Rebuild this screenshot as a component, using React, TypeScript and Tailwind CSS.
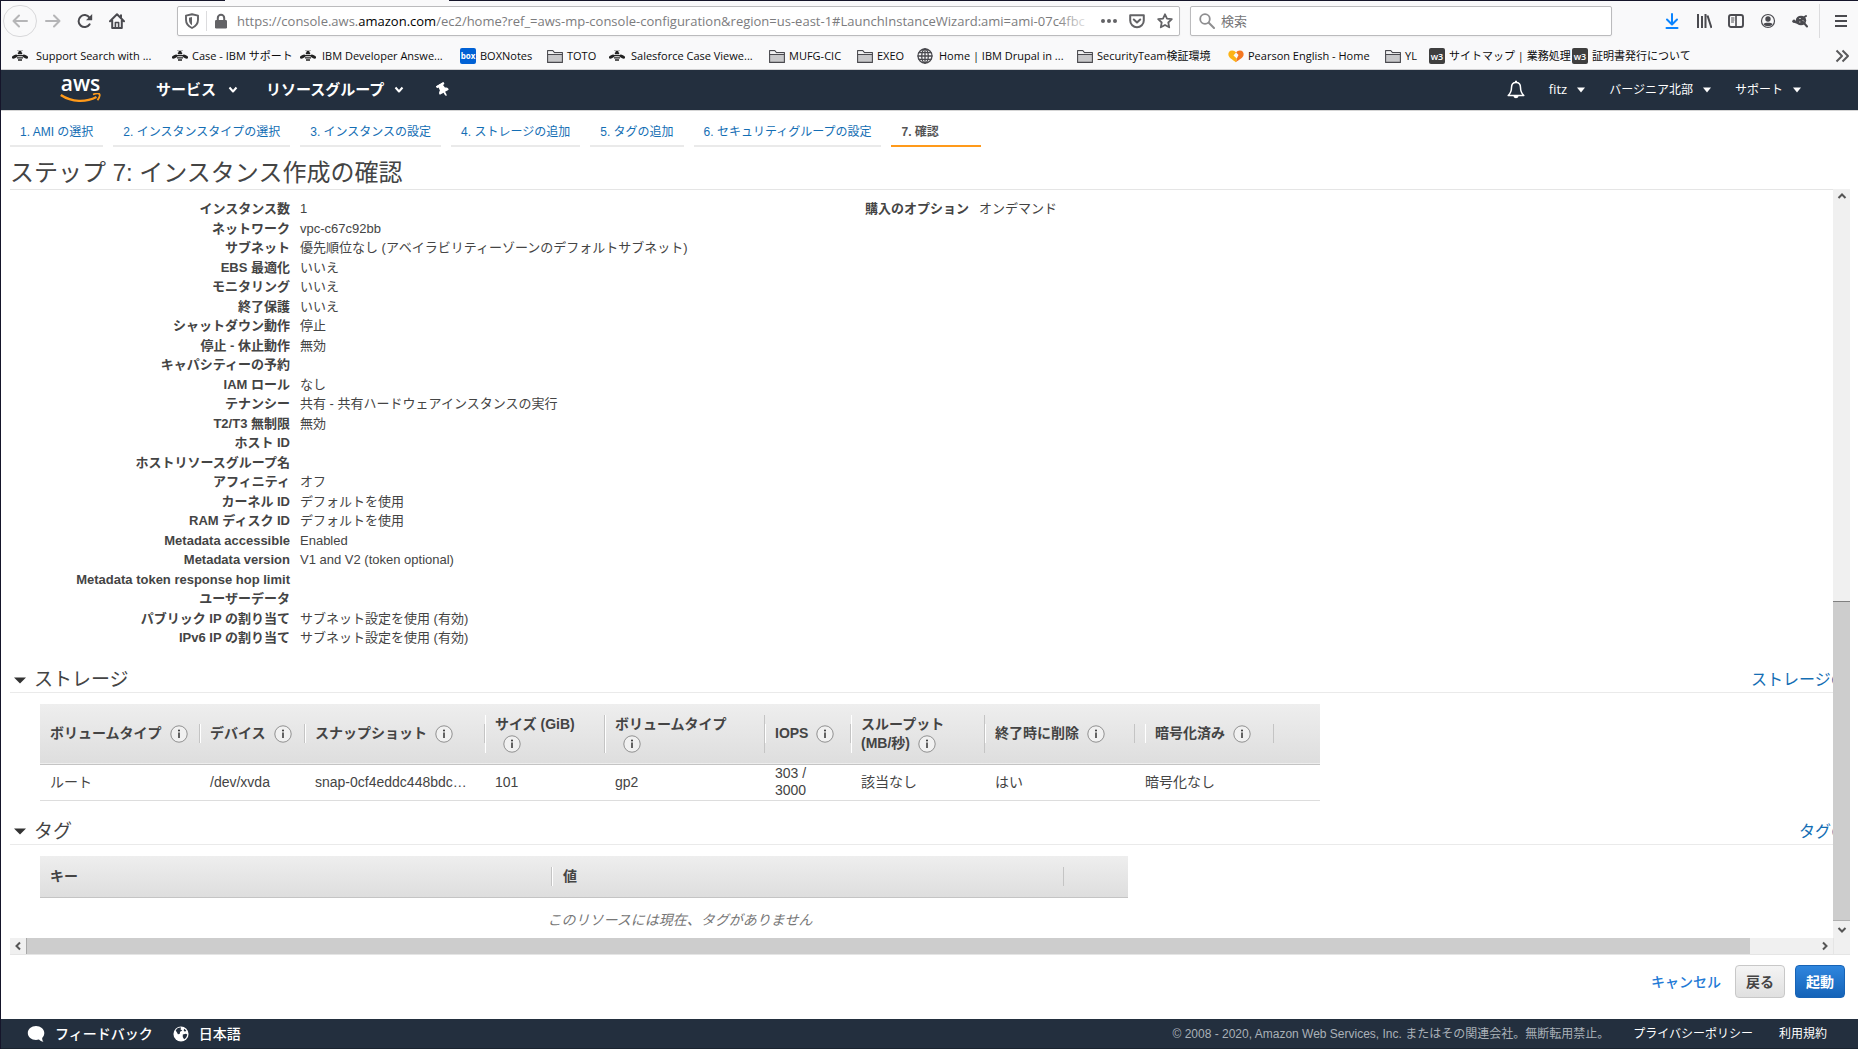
import type { ReactNode } from "react";
import { FaThumbtack } from "react-icons/fa";

const stroke = {
  fill: "none",
  stroke: "currentColor",
  strokeLinecap: "round",
  strokeLinejoin: "round",
} as const;

function Icon({ children, className = "size-4" }: { children: ReactNode; className?: string }) {
  return (
    <svg viewBox="0 0 16 16" className={`shrink-0 ${className}`} aria-hidden="true">
      {children}
    </svg>
  );
}

const BackIcon = () => (
  <Icon>
    <path {...stroke} strokeWidth="2" d="M15 8H1.5M7 2.5 1.5 8 7 13.5" />
  </Icon>
);
const ForwardIcon = () => (
  <Icon>
    <path {...stroke} strokeWidth="2" d="M1 8h13.5M9 2.5 14.5 8 9 13.5" />
  </Icon>
);
const ReloadIcon = () => (
  <Icon>
    <path {...stroke} strokeWidth="2" d="M12.6 11.4A6 6 0 1 1 12.5 4.6" />
    <path fill="currentColor" d="M15.2 1v5.7a.6.6 0 0 1-.6.6H9z" />
  </Icon>
);
const HomeIcon = () => (
  <Icon>
    <path {...stroke} strokeWidth="2" d="M1 8.2 8 1.3l7 6.9M3.2 7.5V15h9.6V7.5" />
    <path {...stroke} strokeWidth="1.6" d="M6.4 14.5V9.5h3.2v5" />
    <path fill="currentColor" d="M11 1.5h2v4l-2-2z" />
  </Icon>
);
const ShieldIcon = () => (
  <Icon>
    <path {...stroke} strokeWidth="1.9" d="M8 1.2 14 2.6v4.2c0 4-2.4 6.6-6 8.2-3.6-1.6-6-4.2-6-8.2V2.6z" />
    <path fill="currentColor" d="M8 4v8.2c-2-1.2-3-2.8-3-5.4V4.7z" />
  </Icon>
);
const LockIcon = () => (
  <Icon>
    <rect x="2" y="7" width="12" height="8.5" rx="1.2" fill="currentColor" />
    <path {...stroke} strokeWidth="2" d="M4.8 7.5V5a3.2 3.2 0 0 1 6.4 0v2.5" />
  </Icon>
);
const DotsIcon = () => (
  <Icon>
    <circle cx="2" cy="8" r="2" fill="currentColor" />
    <circle cx="8" cy="8" r="2" fill="currentColor" />
    <circle cx="14" cy="8" r="2" fill="currentColor" />
  </Icon>
);
const PocketIcon = () => (
  <Icon>
    <path {...stroke} strokeWidth="2" d="M1.2 2.2h13.6V7.5a6.8 6.8 0 0 1-13.6 0z" />
    <path {...stroke} strokeWidth="2" d="M4.8 6.5 8 9.5l3.2-3" />
  </Icon>
);
const StarIcon = () => (
  <Icon>
    <path {...stroke} strokeWidth="1.8" d="m8 1.3 2 4.3 4.8.6-3.5 3.3.9 4.8L8 12l-4.200 2.300.9-4.800L1.200 6.200 6 5.600z" />
  </Icon>
);
const SearchIcon = () => (
  <Icon>
    <circle cx="6" cy="6" r="4.8" {...stroke} strokeWidth="1.8" />
    <path {...stroke} strokeWidth="2" d="m9.8 9.8 5.2 5.2" />
  </Icon>
);
const DownloadIcon = () => (
  <Icon>
    <path {...stroke} strokeWidth="2" d="M8 1v10M3 6.5l5 5 5-5M2.5 15h11" />
  </Icon>
);
const LibraryIcon = () => (
  <Icon>
    <path {...stroke} strokeLinecap="butt" strokeWidth="2" d="M2 1v14M6 3v12M9.5 1v14M11.5 2.5 15.5 15" />
  </Icon>
);
const SidebarIcon = () => (
  <Icon>
    <rect x="1" y="2" width="14" height="12" rx="2" {...stroke} strokeWidth="1.9" />
    <path {...stroke} strokeLinecap="butt" strokeWidth="1.6" d="M8 2v12" />
    <path {...stroke} strokeWidth="1" d="M3.5 5h2.5M3.5 7h2.5M3.5 9h2" />
  </Icon>
);
const AccountIcon = () => (
  <Icon>
    <circle cx="8" cy="8" r="6.5" {...stroke} strokeWidth="1.2" />
    <circle cx="8" cy="6" r="2.7" fill="currentColor" />
    <path fill="currentColor" d="M3.5 11c1-1.8 8-1.8 9 0-1 3-8 3-9 0z" />
  </Icon>
);
const AddonIcon = () => (
  <Icon>
    <ellipse cx="9" cy="7.5" rx="5.2" ry="4.8" fill="currentColor" />
    <circle cx="2" cy="8.2" r="1.7" fill="currentColor" />
    <path {...stroke} strokeWidth="2" d="m12 10 3 3.5M3 9l3 1M12.500 4l1.500-1" />
    <path stroke="#bbb" strokeWidth="1" fill="none" d="M7 5.500h2M10.500 7l1.500 1.500M7 9h1.500" />
  </Icon>
);
const MenuIcon = () => (
  <Icon>
    <path {...stroke} strokeWidth="1.9" strokeLinecap="butt" d="M2 3h12M2 8h12M2 13h12" />
  </Icon>
);
const MoreIcon = () => (
  <Icon>
    <path {...stroke} strokeLinecap="butt" strokeWidth="2" d="M2.5 2.5 8 8l-5.5 5.5M8.5 2.5 14 8l-5.5 5.5" />
  </Icon>
);
const BeeIcon = () => (
  <Icon>
    <ellipse cx="2.7" cy="8.6" rx="3" ry="1.6" fill="#222" transform="rotate(-25 2.7 8.6)" />
    <ellipse cx="13.3" cy="8.6" rx="3" ry="1.6" fill="#222" transform="rotate(25 13.3 8.6)" />
    <path stroke="#222" strokeWidth="1.3" d="M5.8 5.5h4.4M5 7.7h6M5 9.9h6M6 12h4" />
    <circle cx="8" cy="4.2" r="1.6" fill="#222" />
    <path stroke="#222" strokeWidth=".6" d="m6.5 3-1-1M9.5 3l1-1" />
  </Icon>
);
const FolderIcon = () => (
  <Icon>
    <path fill="#c8c8ca" stroke="#4a4a4f" strokeWidth="1.1" strokeLinejoin="round" d="M.6 14.4V2.6h5.2l1.6 2h8v9.8z" />
    <path stroke="#4a4a4f" strokeWidth="1" d="M.6 6.5h14.8" />
    <path fill="#f1f1f2" d="M1.2 3.2h4.3l1.6 2h7.7V6H1.2z" />
  </Icon>
);
const GlobeIcon = () => (
  <Icon>
    <g {...stroke} stroke="#4a4a4f" strokeWidth="1.3">
      <circle cx="8" cy="8" r="7" />
      <ellipse cx="8" cy="8" rx="3.3" ry="7" />
      <path d="M8 1v14M1 8h14M2 4.7h12M2 11.3h12" />
    </g>
  </Icon>
);
const HeartIcon = () => (
  <Icon>
    <path fill="#fcb316" d="M4.2 2.500C1.500 2.500 0 4.500.4 7c.5 2.900 4.200 4.700 7.400 7.200l1-3.700-3.300-3 2.600-3C7.300 3.200 5.800 2.500 4.200 2.500z" />
    <path fill="#f47721" d="M11.800 2.500c2.700 0 4.200 2 3.800 4.500-.5 2.900-4.600 4.700-7.800 7.200L9 10l1.500-3-2.400-2.500c.8-1.300 2.100-2 3.700-2z" />
  </Icon>
);
const BoxIcon = () => (
  <span className="flex size-4 shrink-0 items-center justify-center rounded-xs bg-[#0061d5] text-[8px] leading-none font-bold text-white">
    box
  </span>
);
const W3Icon = () => (
  <span className="flex size-4 shrink-0 items-center justify-center rounded-xs bg-[#3f3f3f] text-[9px] leading-none font-semibold text-white">
    w3
  </span>
);

function ToolButton({ label, children, className = "w-8" }: { label: string; children: ReactNode; className?: string }) {
  return (
    <button type="button" aria-label={label} className={`flex h-8 shrink-0 items-center justify-center ${className}`}>
      {children}
    </button>
  );
}

const bookmarks: { icon: ReactNode; text: string; cls: string }[] = [
  { icon: <BeeIcon />, text: "Support Search with ...", cls: "w-40 gap-2" },
  { icon: <BeeIcon />, text: "Case - IBM サポート", cls: "w-32 gap-1" },
  { icon: <BeeIcon />, text: "IBM Developer Answe...", cls: "w-40 gap-1.5" },
  { icon: <BoxIcon />, text: "BOXNotes", cls: "w-[87px] gap-1" },
  { icon: <FolderIcon />, text: "TOTO", cls: "w-[62px] gap-1" },
  { icon: <BeeIcon />, text: "Salesforce Case Viewe...", cls: "w-40 gap-1.5" },
  { icon: <FolderIcon />, text: "MUFG-CIC", cls: "w-22 gap-1" },
  { icon: <FolderIcon />, text: "EXEO", cls: "w-15 gap-1" },
  { icon: <GlobeIcon />, text: "Home | IBM Drupal in ...", cls: "w-40 gap-1.5" },
  { icon: <FolderIcon />, text: "SecurityTeam検証環境", cls: "w-[151px] gap-1" },
  { icon: <HeartIcon />, text: "Pearson English - Home", cls: "w-[157px] gap-1" },
  { icon: <FolderIcon />, text: "YL", cls: "w-11 gap-1" },
  { icon: <W3Icon />, text: "サイトマップ | 業務処理", cls: "w-[143px] gap-1" },
  { icon: <W3Icon />, text: "証明書発行について", cls: "gap-1" },
];

function BrowserChrome() {
  return (
    <div className="shrink-0 border-b border-[#d0d0d2] bg-[#f9f9fa] font-['Open_Sans','Noto_Sans_CJK_JP',sans-serif] text-[#4a4a4f]">
      <div className="flex h-px bg-[#15152a]">
        <div className="ml-56 w-56 bg-[#f9f9fa]" />
      </div>
      <div className="flex h-10 items-center pl-0.5">
        <ToolButton label="戻る" className="w-[34px] rounded-full border border-[#d8d8da] text-[#b5b5b7]">
          <BackIcon />
        </ToolButton>
        <ToolButton label="進む">
          <span className="text-[#b5b5b7]">
            <ForwardIcon />
          </span>
        </ToolButton>
        <ToolButton label="再読み込み">
          <ReloadIcon />
        </ToolButton>
        <ToolButton label="ホーム">
          <HomeIcon />
        </ToolButton>
        <div className="ml-11 flex h-[30px] min-w-0 flex-[1005] items-center rounded-xs border border-[#bbbbbd] bg-white pl-1.5 text-[#636366] shadow-xs">
          <ShieldIcon />
          <span className="mx-1.5 h-5 w-px bg-[#dcdcde]" />
          <LockIcon />
          <div className="relative ml-2 min-w-0 flex-1 overflow-hidden text-[13px] leading-6 whitespace-nowrap text-[#7c7c7e]">
            https://console.aws.<span className="text-black">amazon.com</span>
            /ec2/home?ref_=aws-mp-console-configuration&amp;region=us-east-1#LaunchInstanceWizard:ami=ami-07c4fbc
            <span className="absolute inset-y-0 right-0 w-9 bg-linear-to-r from-transparent to-white" />
          </div>
          <button type="button" aria-label="ページ操作" className="ml-2 flex w-7">
            <DotsIcon />
          </button>
          <button type="button" aria-label="Pocket に保存" className="flex w-7">
            <PocketIcon />
          </button>
          <button type="button" aria-label="ブックマーク" className="flex w-[22px]">
            <StarIcon />
          </button>
        </div>
        <label className="ml-2.5 flex h-[30px] min-w-0 flex-[416] items-center gap-1.5 rounded-xs border border-[#bbbbbd] bg-white pl-2 text-[#8e8e90] shadow-xs">
          <SearchIcon />
          <input
            type="search"
            aria-label="検索"
            placeholder="検索"
            className="w-full min-w-0 bg-transparent text-[13px] leading-6 outline-none placeholder:text-[#757577]"
          />
        </label>
        <div className="ml-11 flex shrink-0 items-center">
          <ToolButton label="ダウンロード">
            <span className="text-[#0a84ff]">
              <DownloadIcon />
            </span>
          </ToolButton>
          <ToolButton label="ライブラリー">
            <LibraryIcon />
          </ToolButton>
          <ToolButton label="サイドバー">
            <SidebarIcon />
          </ToolButton>
          <ToolButton label="アカウント">
            <AccountIcon />
          </ToolButton>
          <ToolButton label="アドオン">
            <AddonIcon />
          </ToolButton>
          <span className="ml-[3px] h-[34px] w-px bg-[#dcdcde]" />
          <ToolButton label="メニュー" className="ml-1 w-[34px]">
            <MenuIcon />
          </ToolButton>
        </div>
      </div>
      <nav className="flex h-7 items-center pt-0.5 pr-2 pl-[11px] text-[11px] text-[#0c0c0d]">
        {bookmarks.map((b) => (
          <a key={b.text} href="#" className={`flex shrink-0 items-center whitespace-nowrap ${b.cls}`}>
            {b.icon}
            {b.text}
          </a>
        ))}
        <button type="button" aria-label="その他のブックマーク" className="ml-auto text-[#5a5a5c]">
          <MoreIcon />
        </button>
      </nav>
    </div>
  );
}

const Caret = () => (
  <svg viewBox="0 0 8 6" className="h-1.5 w-2 shrink-0" aria-hidden="true">
    <path fill="currentColor" d="M0 .5h8L4 5.5z" />
  </svg>
);
const Chevron = () => (
  <svg viewBox="0 0 10 8" className="h-2 w-2.5 shrink-0" aria-hidden="true">
    <path {...stroke} strokeLinecap="butt" strokeWidth="2" d="m1.5 1.5 3.5 4 3.5-4" />
  </svg>
);

function ConsoleHeader() {
  return (
    <header className="flex h-10 shrink-0 items-center bg-[#232f3e] pr-[57px] pl-[59px] text-white">
      <a href="#" aria-label="AWS" className="flex w-[41px] flex-col items-center">
        <span className="h-4 font-['Open_Sans',sans-serif] text-[21px] leading-3 font-semibold">aws</span>
        <svg viewBox="0 0 41 10" className="h-2.5 w-[41px]" aria-hidden="true">
          <path fill="none" stroke="#ff9a1a" strokeWidth="2.4" d="M.8 2C12 9.5 26 9.5 36.5 4" />
          <path fill="none" stroke="#ff9a1a" strokeWidth="1.8" d="M33 1.5c3-1 6-1 6.5-.3s-.5 3.8-2 6" />
        </svg>
      </a>
      <button type="button" className="ml-[55px] flex items-center gap-3 text-[15px] font-bold">
        サービス
        <Chevron />
      </button>
      <button type="button" className="ml-7 flex items-center gap-2.5 text-[15px] font-bold">
        リソースグループ
        <Chevron />
      </button>
      <button type="button" aria-label="ピン留め" className="ml-8">
        <FaThumbtack className="size-3.5 -rotate-30" />
      </button>
      <div className="ml-auto flex items-center text-xs">
        <button type="button" aria-label="通知" className="mr-6">
          <svg viewBox="0 0 18 20" className="h-5 w-[18px]" aria-hidden="true">
            <path {...stroke} strokeWidth="1.5" d="M9 2.5c-3 0-4.5 2.2-4.5 5 0 4-1.2 6-3.3 8h15.6c-2.1-2-3.3-4-3.3-8 0-2.8-1.5-5-4.5-5z" />
            <path fill="currentColor" d="M6.5 16h5c-.3 3-4.7 3-5 0zM8 .8h2v2H8z" />
          </svg>
        </button>
        <button type="button" className="flex items-center gap-2.5 font-['Open_Sans',sans-serif] text-[13px]">
          fitz
          <Caret />
        </button>
        <button type="button" className="ml-6 flex items-center gap-2.5">
          バージニア北部
          <Caret />
        </button>
        <button type="button" className="ml-6 flex items-center gap-2.5">
          サポート
          <Caret />
        </button>
      </div>
    </header>
  );
}

const steps = [
  "1. AMI の選択",
  "2. インスタンスタイプの選択",
  "3. インスタンスの設定",
  "4. ストレージの追加",
  "5. タグの追加",
  "6. セキュリティグループの設定",
];

function StepTabs() {
  return (
    <nav className="flex gap-2.5 pt-[11px] pl-[9px] text-xs leading-5">
      {steps.map((s) => (
        <a key={s} href="#" className="min-w-[90px] border-b-2 border-[#eaeaea] px-2.5 pb-[3px] text-[#146eb4]">
          {s}
        </a>
      ))}
      <a href="#" aria-current="step" className="min-w-[90px] border-b-2 border-[#ff9a1a] px-2.5 pb-[3px] font-bold text-[#555]">
        7. 確認
      </a>
    </nav>
  );
}

const details: [string, string][] = [
  ["インスタンス数", "1"],
  ["ネットワーク", "vpc-c67c92bb"],
  ["サブネット", "優先順位なし (アベイラビリティーゾーンのデフォルトサブネット)"],
  ["EBS 最適化", "いいえ"],
  ["モニタリング", "いいえ"],
  ["終了保護", "いいえ"],
  ["シャットダウン動作", "停止"],
  ["停止 - 休止動作", "無効"],
  ["キャパシティーの予約", ""],
  ["IAM ロール", "なし"],
  ["テナンシー", "共有 - 共有ハードウェアインスタンスの実行"],
  ["T2/T3 無制限", "無効"],
  ["ホスト ID", ""],
  ["ホストリソースグループ名", ""],
  ["アフィニティ", "オフ"],
  ["カーネル ID", "デフォルトを使用"],
  ["RAM ディスク ID", "デフォルトを使用"],
  ["Metadata accessible", "Enabled"],
  ["Metadata version", "V1 and V2 (token optional)"],
  ["Metadata token response hop limit", ""],
  ["ユーザーデータ", ""],
  ["パブリック IP の割り当て", "サブネット設定を使用 (有効)"],
  ["IPv6 IP の割り当て", "サブネット設定を使用 (有効)"],
];

function InstanceDetails() {
  return (
    <div className="flex pt-[9px] text-[13px]">
      <dl className="w-[689px] shrink-0">
        {details.map(([k, v]) => (
          <div key={k} className="flex h-5 gap-2.5 leading-5 even:h-[19px]">
            <dt className="w-[280px] shrink-0 text-right font-bold">{k}</dt>
            <dd className="whitespace-nowrap">{v}</dd>
          </div>
        ))}
      </dl>
      <dl className="flex-1">
        <div className="flex gap-2.5 leading-5">
          <dt className="w-[270px] shrink-0 text-right font-bold">購入のオプション</dt>
          <dd>オンデマンド</dd>
        </div>
      </dl>
    </div>
  );
}

function SectionHeading({ title, link, linkWidth }: { title: string; link: string; linkWidth: string }) {
  return (
    <div className="flex h-7 items-end justify-between border-b border-[#eaeaea]">
      <h2 className="text-[19px] leading-6 text-[#444]">
        <button type="button" aria-expanded="true" className="flex items-center gap-2 pl-1">
          <svg viewBox="0 0 12 7" className="h-[7px] w-3" aria-hidden="true">
            <path fill="#333" d="M0 .5h12L6 6.5z" />
          </svg>
          {title}
        </button>
      </h2>
      <a href="#" className={`overflow-hidden text-base leading-6 whitespace-nowrap text-[#146eb4] ${linkWidth}`}>
        {link}
      </a>
    </div>
  );
}

function Info({ label }: { label: string }) {
  return (
    <button type="button" aria-label={`${label} の情報`} className="ml-2 inline-flex align-middle">
      <svg viewBox="0 0 18 18" className="size-[18px]" aria-hidden="true">
        <circle cx="9" cy="9" r="8.2" fill="#f1f1f1" stroke="#909090" strokeWidth="1" />
        <circle cx="9" cy="5.5" r="1" fill="#333" />
        <path stroke="#333" strokeWidth="1.5" d="M9 7.500V13" />
      </svg>
    </button>
  );
}

const columns: { label: ReactNode; name: string; cls: string; inner: string }[] = [
  { label: "ボリュームタイプ", name: "ボリュームタイプ", cls: "w-40", inner: "border-l-transparent" },
  { label: "デバイス", name: "デバイス", cls: "w-[105px]", inner: "border-l-white" },
  { label: "スナップショット", name: "スナップショット", cls: "w-[180px]", inner: "border-l-white" },
  { label: <>サイズ (GiB)<br /></>, name: "サイズ", cls: "w-[120px]", inner: "border-l-white" },
  { label: <>ボリュームタイプ<br /></>, name: "ボリュームタイプ", cls: "w-40", inner: "border-l-white" },
  { label: "IOPS", name: "IOPS", cls: "w-[86px]", inner: "border-l-white" },
  { label: <>スループット<br />(MB/秒)</>, name: "スループット", cls: "w-[134px]", inner: "border-l-white" },
  { label: "終了時に削除", name: "終了時に削除", cls: "w-[150px]", inner: "border-l-white" },
  { label: "暗号化済み", name: "暗号化済み", cls: "w-[185px]", inner: "ml-2.5 w-[129px] border-l-white" },
];

const volume = ["ルート", "/dev/xvda", "snap-0cf4eddc448bdc…", "101", "gp2", "303 / 3000", "該当なし", "はい", "暗号化なし"];

function StorageTable() {
  return (
    <table className="mt-[11px] ml-[30px] table-fixed border-collapse text-sm text-[#444]">
      <thead>
        <tr className="h-15 border-b border-[#c4c4c4] bg-linear-to-b from-[#eeeeee] to-[#dedede]">
          {columns.map((c, i) => (
            <th key={i} scope="col" className={`p-0 text-left align-middle font-bold ${c.cls}`}>
              <div className={`border-x border-r-[#c4c4c4] pl-[9px] leading-[19px] whitespace-nowrap ${c.inner}`}>
                {c.label}
                <Info label={c.name} />
              </div>
            </th>
          ))}
        </tr>
      </thead>
      <tbody>
        <tr className="h-9 border-b border-[#dddddd]">
          {volume.map((v, i) => (
            <td key={i} className={`py-0 pl-2.5 leading-[17px] ${i === 5 ? "pr-8" : "whitespace-nowrap"}`}>
              {v}
            </td>
          ))}
        </tr>
      </tbody>
    </table>
  );
}

function TagTable() {
  return (
    <table className="mt-[11px] ml-[30px] border-collapse text-sm text-[#444]">
      <thead>
        <tr className="h-[42px] border-b border-[#c4c4c4] bg-linear-to-b from-[#eeeeee] to-[#dedede] text-left">
          <th scope="col" className="w-[512px] p-0">
            <div className="border-r border-[#c4c4c4] pl-2.5 leading-[19px]">キー</div>
          </th>
          <th scope="col" className="w-[576px] p-0">
            <div className="w-[512px] border-x border-r-[#c4c4c4] border-l-white pl-2.5 leading-[19px]">値</div>
          </th>
        </tr>
      </thead>
      <tbody>
        <tr>
          <td colSpan={2} className="pl-48 text-center leading-[44px] text-[#777] italic">
            このリソースには現在、タグがありません
          </td>
        </tr>
      </tbody>
    </table>
  );
}

function Arrow({ d }: { d: string }) {
  return (
    <svg viewBox="0 0 10 10" className="size-2.5" aria-hidden="true">
      <path fill="none" stroke="#555" strokeWidth="2" d={d} />
    </svg>
  );
}

function ScrollArea({ children }: { children: ReactNode }) {
  return (
    <div className="mr-2 ml-[9px] grid min-h-0 flex-1 grid-cols-[minmax(0,1fr)_17px] grid-rows-[minmax(0,1fr)_17px]">
      <div className="overflow-hidden border-t border-[#e5e5e5]">{children}</div>
      <div className="flex flex-col bg-[#f0f0f0]">
        <div className="flex h-3.5 items-center justify-center">
          <Arrow d="m1.5 7 3.5-3.5L8.5 7" />
        </div>
        <div className="flex min-h-0 flex-1 flex-col">
          <div className="flex-[398]" />
          <div className="flex-[318] border-y border-t-[#808080] border-b-[#b0b0b0] bg-[#cdcdcd]" />
        </div>
        <div className="flex h-[17px] items-center justify-center">
          <Arrow d="m1.5 3 3.5 3.5L8.5 3" />
        </div>
      </div>
      <div className="flex border-b border-[#e5e5e5] bg-[#f0f0f0]">
        <div className="flex w-4 items-center justify-center">
          <Arrow d="M7 1.5 3.5 5 7 8.5" />
        </div>
        <div className="flex min-w-0 flex-1">
          <div className="flex-[1723] border-l border-[#a8a8a8] bg-[#cdcdcd]" />
          <div className="flex-[66]" />
        </div>
        <div className="flex w-[17px] items-center justify-center">
          <Arrow d="M3 1.5 6.5 5 3 8.5" />
        </div>
      </div>
      <div className="border-b border-l border-[#e5e5e5] bg-[#f0f0f0]" />
    </div>
  );
}

function ConsoleFooter() {
  return (
    <footer className="flex h-[30px] shrink-0 items-center border-b border-[#1a2430] bg-[#232f3e] pr-[31px] pl-[26px] text-xs text-white">
      <button type="button" className="flex items-center gap-2.5 text-sm font-medium">
        <svg viewBox="0 0 18 18" className="size-[18px]" aria-hidden="true">
          <path fill="currentColor" d="M9 1C4.5 1 .8 4 .8 8S4.5 15 9 15c1 0 2-.1 2.9-.4 1.2 1.3 2.6 2 4.6 2.2-1-1.2-1.4-2.4-1.3-3.9C16.6 11.5 17.3 9.9 17.3 8c0-4-3.8-7-8.3-7z" />
        </svg>
        フィードバック
      </button>
      <button type="button" className="ml-5 flex items-center gap-2.5 text-sm font-medium">
        <svg viewBox="0 0 18 18" className="size-4" aria-hidden="true">
          <circle cx="9" cy="9" r="8.5" fill="currentColor" />
          <path fill="#232f3e" d="M3 5c2-3 4-3.500 6-3.200L8.500 4l2 1L8 6.500 7.500 9l-2 .3-1-2zM11 9.500l3.500-.8 1.500.8c-.3 2.500-1.700 4.500-3.500 5.500L11 12.500zM12.500 3l2.500 2-1.500 1.500L12 5z" />
        </svg>
        日本語
      </button>
      <span className="ml-auto text-[#aab1b8]">
        © 2008 - 2020, Amazon Web Services, Inc. またはその関連会社。無断転用禁止。
      </span>
      <a href="#" className="ml-6">プライバシーポリシー</a>
      <a href="#" className="ml-[26px]">利用規約</a>
    </footer>
  );
}

export default function App() {
  return (
    <div
      lang="ja"
      className="flex h-screen flex-col overflow-hidden border-l border-[#15152a] bg-white font-['Liberation_Sans','Noto_Sans_CJK_JP',sans-serif] text-[#444]"
    >
      <BrowserChrome />
      <ConsoleHeader />
      <main className="flex min-h-0 flex-1 flex-col border-t border-[#d5d5d5]">
        <StepTabs />
        <h1 className="pt-3 pb-0.5 pl-[9px] text-2xl leading-7">ステップ 7: インスタンス作成の確認</h1>
        <ScrollArea>
          <InstanceDetails />
          <div className="mt-[17px]">
            <SectionHeading title="ストレージ" link="ストレージの編集" linkWidth="w-[82px]" />
            <StorageTable />
          </div>
          <div className="mt-4">
            <SectionHeading title="タグ" link="タグの編集" linkWidth="w-[34px]" />
            <TagTable />
          </div>
        </ScrollArea>
        <div className="flex items-center justify-end gap-2.5 pt-2.5 pr-[13px] pb-[21px] text-sm">
          <a href="#" className="mr-1 font-medium text-[#1f7ad6]">キャンセル</a>
          <button
            type="button"
            className="h-[33px] w-[50px] rounded border border-[#c8c8c8] bg-linear-to-b from-[#f4f4f4] to-[#e0e0e0] font-bold text-[#444]"
          >
            戻る
          </button>
          <button
            type="button"
            className="h-[33px] w-[50px] rounded border border-[#1763b5] bg-linear-to-b from-[#2f86de] to-[#1463b8] font-bold text-white"
          >
            起動
          </button>
        </div>
      </main>
      <ConsoleFooter />
    </div>
  );
}
